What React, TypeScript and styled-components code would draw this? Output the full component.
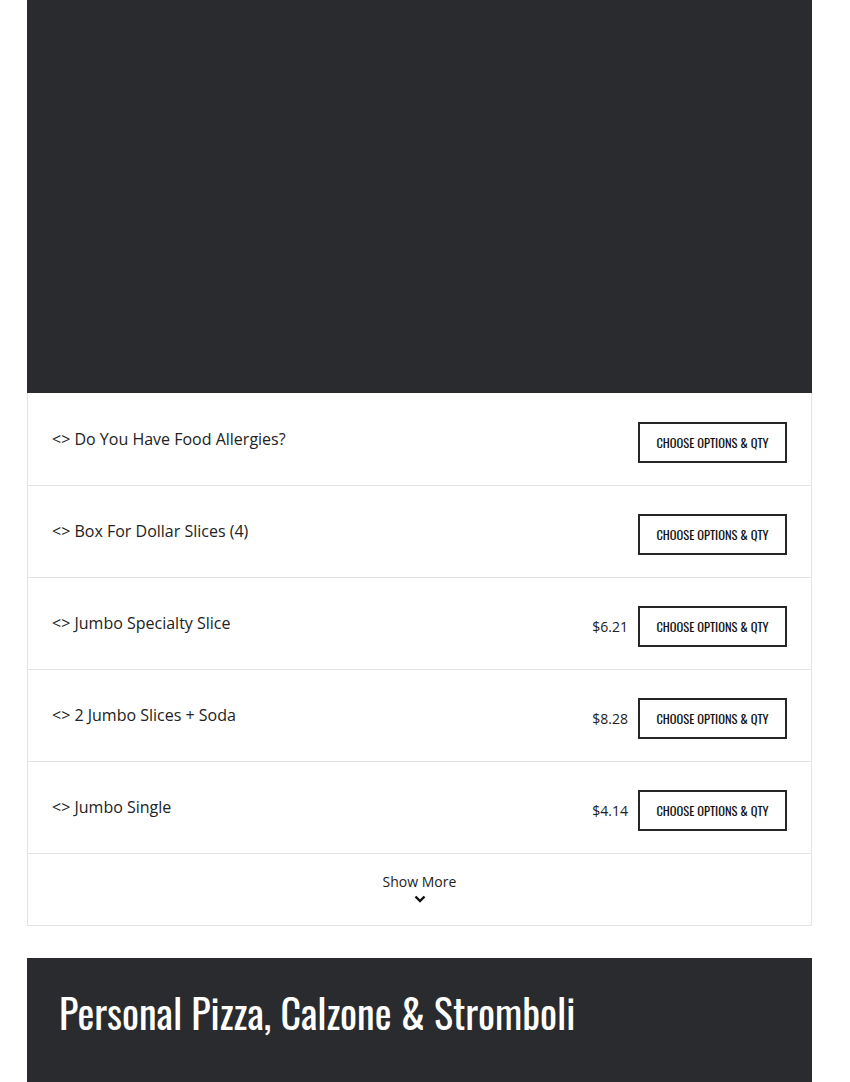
import styled, { createGlobalStyle } from "styled-components";

const Global = createGlobalStyle`
  html, body {
    margin: 0;
    padding: 0;
    background: #ffffff;
  }
  * {
    box-sizing: border-box;
  }
`;

const items = [
  { name: "Do You Have Food Allergies?", price: "" },
  { name: "Box For Dollar Slices (4)", price: "" },
  { name: "Jumbo Specialty Slice", price: "$6.21" },
  { name: "2 Jumbo Slices + Soda", price: "$8.28" },
  { name: "Jumbo Single", price: "$4.14" },
];

const condensed = `"Oswald", "DejaVu Sans Condensed", "Liberation Sans Narrow", "Roboto Condensed", sans-serif`;

export default function App() {
  return (
    <>
      <Global />
      <Page>
        <Hero />
        <List>
          {items.map((item) => (
            <Row key={item.name}>
              <Title>&lt;&gt; {item.name}</Title>
              <Actions>
                {item.price ? <Price>{item.price}</Price> : ""}
                <ChooseButton>Choose Options &amp; Qty</ChooseButton>
              </Actions>
            </Row>
          ))}
          <MoreRow>
            <span>Show More</span>
            <svg width="12" height="8" viewBox="0 0 12 8">
              <path
                d="M1.5 1.5 L6 6 L10.5 1.5"
                fill="none"
                stroke="#111"
                strokeWidth="2.4"
              />
            </svg>
          </MoreRow>
        </List>
        <Section>
          <h2>Personal Pizza, Calzone &amp; Stromboli</h2>
        </Section>
      </Page>
    </>
  );
}

const Page = styled.div`
  width: 785px;
  margin-left: 27px;
  font-family: "Open Sans", "Noto Sans", sans-serif;
  color: #222;
`;

const Hero = styled.div`
  height: 393px;
  background-color: #292b2e;
`;

const List = styled.div`
  padding-top: 1px;
  border-left: 1px solid #e3e3e3;
  border-right: 1px solid #e3e3e3;
`;

const Row = styled.div`
  height: 92px;
  display: flex;
  justify-content: space-between;
  padding: 0 24px;
  border-bottom: 1px solid #e3e3e3;
`;

const Title = styled.div`
  padding-top: 33px;
  font-size: 16px;
  line-height: 24px;
  color: #222;
`;

const Actions = styled.div`
  display: flex;
  align-items: center;
  gap: 10px;
  padding-top: 28px;
  align-self: flex-start;
`;

const Price = styled.span`
  font-size: 14px;
  color: #222;
`;

const ChooseButton = styled.div`
  width: 149px;
  height: 41px;
  border: 2px solid #262626;
  display: flex;
  align-items: center;
  justify-content: center;
  font-family: ${condensed};
  font-weight: 400;
  font-size: 12.5px;
  text-transform: uppercase;
  color: #111;
  cursor: pointer;
`;

const MoreRow = styled.div`
  height: 72px;
  display: flex;
  flex-direction: column;
  align-items: center;
  padding-top: 18px;
  gap: 3px;
  font-size: 14px;
  line-height: 20px;
  border-bottom: 1px solid #e3e3e3;
  cursor: pointer;
`;

const Section = styled.div`
  margin-top: 32px;
  height: 124px;
  background-color: #292b2e;
  padding: 30px 32px 0;
  h2 {
    margin: 0;
    font-family: ${condensed};
    font-weight: 400;
    font-size: 40px;
    line-height: 48px;
    color: #ffffff;
  }
`;
